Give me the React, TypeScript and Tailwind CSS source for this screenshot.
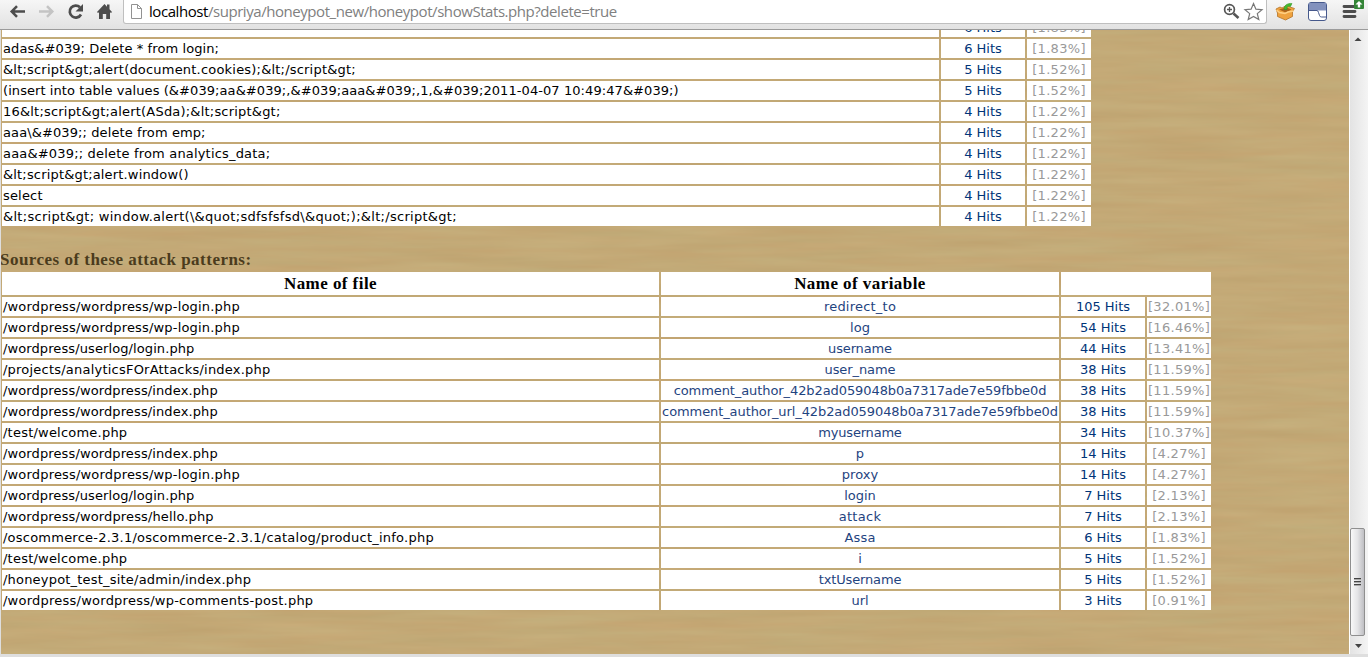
import React from "react";

type Pattern = { text: string; hits: string; share: string; spacing: number };
type Source = { file: string; spacing: number; variable: string; varSpacing: number; hits: string; share: string };

const patterns: Pattern[] = [
  { text: "", hits: "6 Hits", share: "[1.83%]", spacing: 0 },
  { text: "adas&#039; Delete * from login;", hits: "6 Hits", share: "[1.83%]", spacing: 0.09 },
  { text: "&lt;script&gt;alert(document.cookies);&lt;/script&gt;", hits: "5 Hits", share: "[1.52%]", spacing: 0.2 },
  { text: "(insert into table values (&#039;aa&#039;,&#039;aaa&#039;,1,&#039;2011-04-07 10:49:47&#039;)", hits: "5 Hits", share: "[1.52%]", spacing: 0.075 },
  { text: "16&lt;script&gt;alert(ASda);&lt;script&gt;", hits: "4 Hits", share: "[1.22%]", spacing: 0.2 },
  { text: "aaa\\&#039;; delete from emp;", hits: "4 Hits", share: "[1.22%]", spacing: 0.1 },
  { text: "aaa&#039;; delete from analytics_data;", hits: "4 Hits", share: "[1.22%]", spacing: 0.18 },
  { text: "&lt;script&gt;alert.window()", hits: "4 Hits", share: "[1.22%]", spacing: 0.17 },
  { text: "select", hits: "4 Hits", share: "[1.22%]", spacing: 0.17 },
  { text: "&lt;script&gt; window.alert(\\&quot;sdfsfsfsd\\&quot;);&lt;/script&gt;", hits: "4 Hits", share: "[1.22%]", spacing: 0.29 },
];

const sources: Source[] = [
  { file: "/wordpress/wordpress/wp-login.php", spacing: 0.18, variable: "redirect_to", varSpacing: 0.22, hits: "105 Hits", share: "[32.01%]" },
  { file: "/wordpress/wordpress/wp-login.php", spacing: 0.18, variable: "log", varSpacing: 0, hits: "54 Hits", share: "[16.46%]" },
  { file: "/wordpress/userlog/login.php", spacing: 0.1, variable: "username", varSpacing: -0.15, hits: "44 Hits", share: "[13.41%]" },
  { file: "/projects/analyticsFOrAttacks/index.php", spacing: 0.22, variable: "user_name", varSpacing: -0.08, hits: "38 Hits", share: "[11.59%]" },
  { file: "/wordpress/wordpress/index.php", spacing: 0.12, variable: "comment_author_42b2ad059048b0a7317ade7e59fbbe0d", varSpacing: -0.085, hits: "38 Hits", share: "[11.59%]" },
  { file: "/wordpress/wordpress/index.php", spacing: 0.12, variable: "comment_author_url_42b2ad059048b0a7317ade7e59fbbe0d", varSpacing: -0.09, hits: "38 Hits", share: "[11.59%]" },
  { file: "/test/welcome.php", spacing: 0.22, variable: "myusername", varSpacing: -0.2, hits: "34 Hits", share: "[10.37%]" },
  { file: "/wordpress/wordpress/index.php", spacing: 0.12, variable: "p", varSpacing: 0, hits: "14 Hits", share: "[4.27%]" },
  { file: "/wordpress/wordpress/wp-login.php", spacing: 0.18, variable: "proxy", varSpacing: 0, hits: "14 Hits", share: "[4.27%]" },
  { file: "/wordpress/userlog/login.php", spacing: 0.1, variable: "login", varSpacing: 0, hits: "7 Hits", share: "[2.13%]" },
  { file: "/wordpress/wordpress/hello.php", spacing: 0.13, variable: "attack", varSpacing: 0.3, hits: "7 Hits", share: "[2.13%]" },
  { file: "/oscommerce-2.3.1/oscommerce-2.3.1/catalog/product_info.php", spacing: 0.23, variable: "Assa", varSpacing: 0.2, hits: "6 Hits", share: "[1.83%]" },
  { file: "/test/welcome.php", spacing: 0.22, variable: "i", varSpacing: 0, hits: "5 Hits", share: "[1.52%]" },
  { file: "/honeypot_test_site/admin/index.php", spacing: 0.2, variable: "txtUsername", varSpacing: -0.15, hits: "5 Hits", share: "[1.52%]" },
  { file: "/wordpress/wordpress/wp-comments-post.php", spacing: 0.24, variable: "url", varSpacing: 0, hits: "3 Hits", share: "[0.91%]" },
];

const cell = "h-[19px] whitespace-nowrap bg-white leading-5";
const hitsCell = `${cell} text-center text-[#003478]`;
const shareCell = `${cell} text-center text-[#999999] tracking-[0.3px]`;
const headCell = "h-[23px] bg-white text-center font-['Liberation_Serif',serif] text-[17px] font-bold leading-[23px] tracking-[0.44px] text-black";

function Toolbar() {
  return (
    <header className="flex h-[30px] shrink-0 border-b border-[#9b9b9b] bg-gradient-to-b from-[#f6f6f6] to-[#e2e2e2]">
      <div className="flex w-[123px] shrink-0">
        <svg width="123" height="29" viewBox="0 0 123 29" fill="none">
          <path d="M25 11.5H11.5M17 6.2l-5.300 5.300 5.300 5.300" stroke="#4d4d4d" strokeWidth="2.500" />
          <path d="M39 11.500H52.500M47 6.200l5.300 5.300-5.300 5.300" stroke="#c4c4c4" strokeWidth="2.500" />
          <path d="M80 7.300A6 6 0 1 0 81 14.500" stroke="#4d4d4d" strokeWidth="2.700" />
          <path d="M83 4v7.500h-7.500z" fill="#4d4d4d" />
          <path d="M97 12l7.500-8 2.500 2.700V4.500h2.500v4.800L112 12l-1 1-1-.7V19h-3.800v-5h-3.400v5H99v-6.700l-1 .7z" fill="#4d4d4d" />
        </svg>
      </div>
      <div className="flex h-6 w-[1144px] shrink-0 rounded-b-[3px] border-x border-b border-[#bfbfbf] bg-white">
        <svg width="25" height="23" viewBox="0 0 25 23" fill="none">
          <path d="M7.500 4.500h6l4 4v10h-10z" fill="#fff" stroke="#929292" />
          <path d="M13.500 4.500v4h4" stroke="#929292" />
        </svg>
        <span className="w-[1063px] whitespace-pre font-['Open_Sans',sans-serif] text-[15px] leading-[22px] tracking-[-0.44px] text-[#808080]">
          <span className="text-black">localhost</span>/supriya/honeypot_new/honeypot/showStats.php?delete=true
        </span>
        <svg width="54" height="24" viewBox="1212 0 54 24" fill="none">
          <circle cx="1229.500" cy="9.500" r="4.900" stroke="#555" strokeWidth="1.700" />
          <path d="M1227 9.500h5M1229.500 7v5" stroke="#555" strokeWidth="1.300" />
          <path d="M1233.500 13.500l5 4.500" stroke="#555" strokeWidth="2.600" />
          <path d="M1253.500 3.500l2.400 5.700 6.100.5-4.700 3.900 1.500 6-5.300-3.200-5.300 3.200 1.500-6-4.700-3.900 6.100-.5z" stroke="#777" strokeWidth="1.200" fill="#fff" />
        </svg>
      </div>
      <svg width="101" height="29" viewBox="1267 0 101 29" fill="none">
        <path d="M1276 9l4-2 2 1 5-3 3 2 4.500 1.500-2 3v5l-7 3.500-8-3.500v-3.500z" fill="#efa23f" stroke="#b47428" strokeWidth=".8" />
        <path d="M1279 9.500l6.500 3 6-3-5-2z" fill="#a9631b" />
        <path d="M1276.500 10l3 2.500 5.500 1 3-1.500 5.500-1" stroke="#ffd083" strokeWidth="1.500" />
        <path d="M1284 9.500c0-4 3-6.500 8-6l-1.500 3c-3-.5-3.500 0-3.500 3z" fill="#43ba2e" stroke="#2d8d20" strokeWidth=".5" />
        <rect x="1308.500" y="2.500" width="18" height="18" rx="2.500" fill="#fff" stroke="#46598c" />
        <path d="M1309 3h17v7.500h-17z" fill="#8291bd" />
        <path d="M1309 10.500h8q1 0 1.500 2l1 3q.5 1.500 2 1.500h4.500" stroke="#46598c" />
        <path d="M1344 6.500h11M1344 11.500h11M1344 16.500h11" stroke="#4d4d4d" strokeWidth="2.800" strokeLinecap="round" />
        <path d="M1354 0h10v8q0 1-1 1h-8q-1 0-1-1z" fill="#348537" />
        <path d="M1359 1l3.500 3.500h-2.300V7.500h-2.400V4.500h-2.300z" fill="#fff" />
      </svg>
    </header>
  );
}

function Wood() {
  return (
    <svg className="absolute inset-0 h-full w-full" preserveAspectRatio="none">
      <filter id="grain" x="0" y="0" width="100%" height="100%" colorInterpolationFilters="sRGB">
        <feTurbulence type="fractalNoise" baseFrequency="0.008 0.11" numOctaves="3" seed="8" />
        <feColorMatrix values="0.03 0 0.03 0 0.735  0.03 0.05 0 0 0.623  0.03 0.05 0 0 0.424  0 0 0 0 1" />
      </filter>
      <rect width="100%" height="100%" fill="#c3aa77" />
      <rect width="100%" height="100%" filter="url(#grain)" />
    </svg>
  );
}

function Scrollbar() {
  return (
    <div className="flex w-[19px] shrink-0 flex-col items-center border-l border-white bg-gradient-to-r from-[#e3e3e3] to-[#f4f4f4]">
      <svg width="18" height="498" viewBox="0 0 18 498">
        <path d="M4.500 11L8 7.500l3.500 3.500z" fill="#444" />
      </svg>
      <div className="flex h-[108px] w-[15px] flex-col items-center justify-center gap-px self-start rounded-[2px] border border-[#8f8f8f] bg-gradient-to-r from-[#f8f8f8] via-[#e4e4e6] to-[#bfbfc3]">
        <div className="h-[2px] w-[7px] border-t border-[#444] bg-[#aaa]" />
        <div className="h-[2px] w-[7px] border-t border-[#444] bg-[#aaa]" />
        <div className="h-[2px] w-[7px] border-t border-[#444] bg-[#aaa]" />
      </div>
      <svg width="18" height="18" viewBox="0 0 18 18">
        <path d="M5 8h7l-3.500 4z" fill="#444" />
      </svg>
    </div>
  );
}

export default function App() {
  return (
    <div className="flex h-[657px] w-[1368px] flex-col overflow-hidden bg-[#dedede]">
      <Toolbar />
      <div className="flex h-[624px] shrink-0">
        <main className="relative w-[1349px] shrink-0 overflow-hidden border-l border-[#dedede] font-['DejaVu_Sans',Verdana,sans-serif] text-[13px]">
          <Wood />
          <div className="relative -mt-3 pl-px">
            <div className="grid w-[1089px] grid-cols-[937px_84px_64px] gap-0.5">
              {patterns.map((row, i) => (
                <React.Fragment key={i}>
                  <div className={`${cell} pl-px text-black`} style={{ letterSpacing: row.spacing }}>{row.text}</div>
                  <div className={hitsCell}>{row.hits}</div>
                  <div className={shareCell}>{row.share}</div>
                </React.Fragment>
              ))}
            </div>
            <h2 className="-ml-0.5 mt-[23px] h-[23px] whitespace-nowrap font-['Liberation_Serif',serif] text-[17px] font-bold leading-[22px] tracking-[0.48px] text-[#4b3b1c]">
              Sources of these attack patterns:
            </h2>
            <div className="grid w-[1209px] grid-cols-[657px_398px_84px_64px] gap-0.5">
              <div className={headCell}>Name of file</div>
              <div className={headCell}>Name of variable</div>
              <div className="col-span-2 h-[23px] bg-white" />
              {sources.map((row, i) => (
                <React.Fragment key={i}>
                  <div className={`${cell} pl-px text-black`} style={{ letterSpacing: row.spacing }}>{row.file}</div>
                  <div className={`${cell} text-center text-[#1f4480]`} style={{ letterSpacing: row.varSpacing }}>{row.variable}</div>
                  <div className={hitsCell}>{row.hits}</div>
                  <div className={shareCell}>{row.share}</div>
                </React.Fragment>
              ))}
            </div>
          </div>
        </main>
        <Scrollbar />
      </div>
    </div>
  );
}
